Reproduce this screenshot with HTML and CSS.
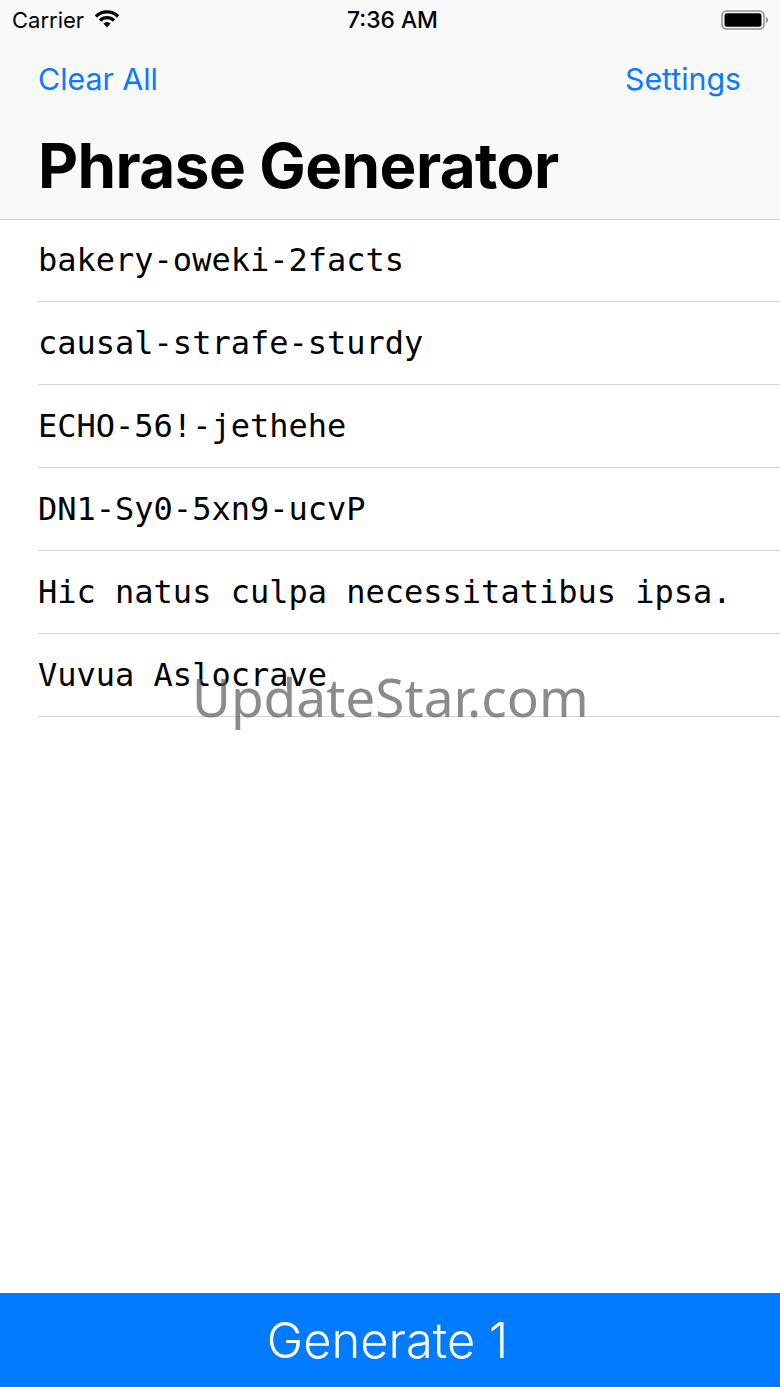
FILE: index.html
```html
<!DOCTYPE html>
<html lang="en">
<head>
<meta charset="utf-8">
<title>Phrase Generator</title>
<link rel="stylesheet" href="styles.css">
</head>
<body>
<div class="screen">
  <header class="nav">
    <div class="status">
      <div class="status-left">
        <span class="carrier">Carrier</span>
        <svg class="wifi" width="26" height="19" viewBox="0 0 26 19"><path d="M2 7.500a15.500 15.500 0 0 1 22 0" fill="none" stroke="#000" stroke-width="3.200"/><path d="M6 11.500a10 10 0 0 1 14 0" fill="none" stroke="#000" stroke-width="3.200"/><path d="M9.400 14.500a5 5 0 0 1 7.200 0L13 18.500z" fill="#000"/></svg>
      </div>
      <span class="time">7:36 AM</span>
      <svg class="battery" width="48" height="22" viewBox="0 0 48 22"><rect x="1" y="2" width="42" height="18" rx="4.500" fill="none" stroke="#8e8e8e" stroke-width="1.500"/><rect x="3.500" y="4.300" width="37" height="13.400" rx="2.500" fill="#000"/><path d="M45 8v6c1.200-.4 2-1.600 2-3s-.8-2.600-2-3z" fill="#8e8e8e"/></svg>
    </div>
    <div class="actions">
      <span class="action">Clear All</span>
      <span class="action">Settings</span>
    </div>
    <h1 class="title">Phrase Generator</h1>
  </header>
  <ul class="list">
    <li class="row"><span class="phrase">bakery-oweki-2facts</span></li>
    <li class="row"><span class="phrase">causal-strafe-sturdy</span></li>
    <li class="row"><span class="phrase">ECHO-56!-jethehe</span></li>
    <li class="row"><span class="phrase">DN1-Sy0-5xn9-ucvP</span></li>
    <li class="row"><span class="phrase">Hic natus culpa necessitatibus ipsa.</span></li>
    <li class="row"><span class="phrase">Vuvua Aslocrave</span></li>
  </ul>
  <div class="watermark">UpdateStar.com</div>
  <button class="generate">Generate 1</button>
</div>
</body>
</html>
```

FILE: styles.css
```css
* { box-sizing: border-box; }
html, body { margin: 0; padding: 0; background: #fff; }
.screen {
  position: relative;
  width: 780px;
  height: 1387px;
  display: flex;
  flex-direction: column;
  overflow: hidden;
  font-family: Inter, "Liberation Sans", sans-serif;
}
.nav {
  height: 220px;
  background: #f9f9fa;
  border-bottom: 1px solid #d4d4d4;
  flex: none;
}
.status {
  height: 40px;
  padding: 0 12px;
  display: flex;
  align-items: center;
  justify-content: space-between;
  position: relative;
}
.status-left { display: flex; align-items: center; gap: 11px; }
.carrier { font-size: 22px; color: #000; }
.wifi { display: block; margin-top: -3px; margin-left: -1px; }
.time {
  position: absolute;
  left: 5px;
  right: 0;
  top: 6px;
  text-align: center;
  font-size: 22.800px;
  font-weight: 500;
  color: #000;
}
.battery { display: block; margin-right: -1px; }
.actions {
  display: flex;
  justify-content: space-between;
  margin-top: 19px;
  padding: 0 39px 0 38px;
  height: 40px;
  align-items: center;
  font-size: 30.300px;
  color: #0a7aff;
}
.title {
  margin: 30px 0 0 38px;
  font-size: 62px;
  line-height: 74px;
  font-weight: 700;
  letter-spacing: -0.600px;
  color: #000;
}
.list { list-style: none; margin: 0; padding: 0 0 0 38px; flex: none; }
.row {
  height: 83px;
  border-bottom: 1px solid #d6d6d6;
  display: flex;
  align-items: center;
}
.row:first-child { height: 82px; padding-bottom: 2px; }
.phrase {
  font-family: "DejaVu Sans Mono", "Liberation Mono", monospace;
  font-size: 32px;
  color: #000;
}
.watermark {
  position: absolute;
  left: 192px;
  top: 662px;
  font-family: "Noto Sans", "Open Sans", sans-serif;
  font-size: 53.200px;
  line-height: 70px;
  color: rgba(90, 90, 90, 0.7);
}
.generate {
  margin-top: auto;
  height: 94px;
  border: 0;
  background: #007aff;
  color: #fff;
  font-family: Inter, "Liberation Sans", sans-serif;
  font-size: 48.800px;
  font-weight: 300;
  padding: 0 5px 0 0;
}
```
